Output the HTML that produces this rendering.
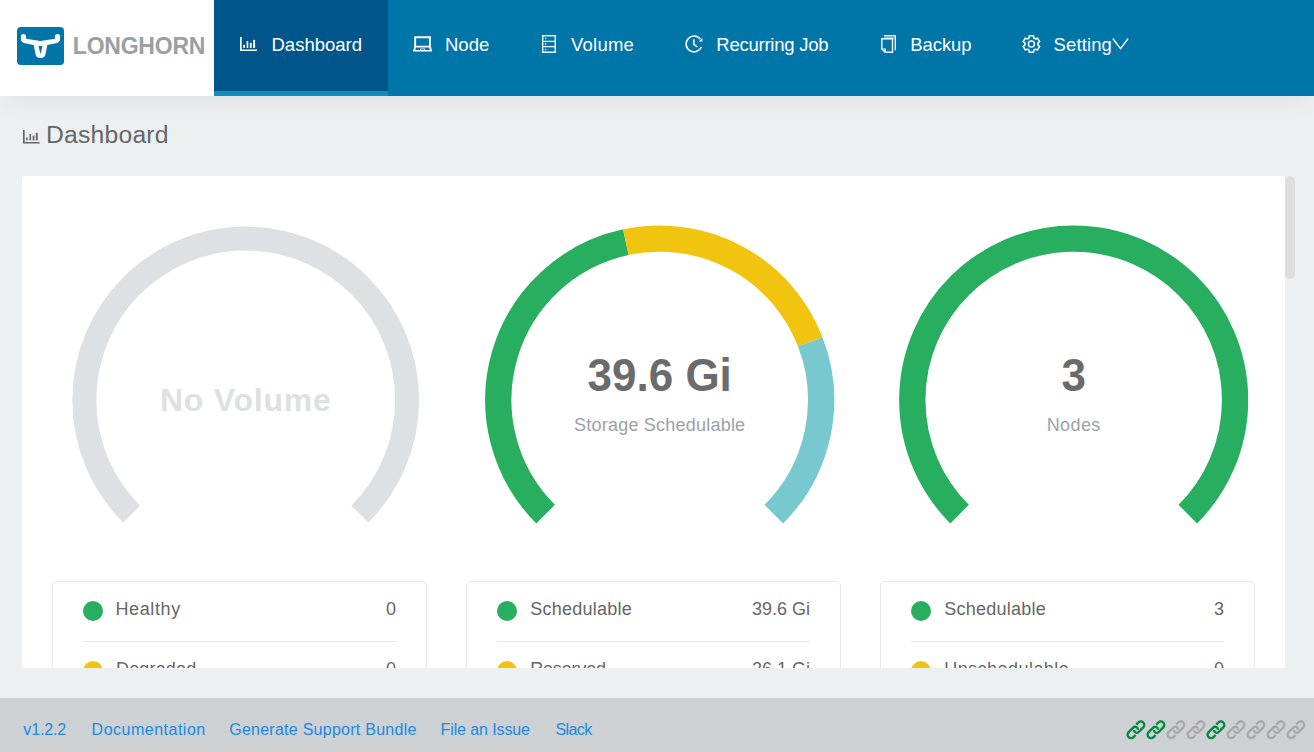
<!DOCTYPE html>
<html lang="en">
<head>
<meta charset="utf-8">
<title>Longhorn</title>
<style>
html,body{margin:0;padding:0;}
body{width:1314px;height:752px;overflow:hidden;position:relative;background:#ecf0f1;font-family:"Liberation Sans",sans-serif;color:#666;}
.abs{position:absolute;}
.t{position:absolute;white-space:nowrap;line-height:normal;}
#hdr{left:0;top:0;width:1314px;height:96px;background:#0075a8;box-shadow:0 1px 30px rgba(0,0,0,0.07);}
#logo{left:0;top:0;width:214px;height:96px;background:#fff;}
#active{left:214px;top:0;width:174px;height:91px;background:#00558b;border-bottom:5px solid #108ebb;}
.nav{color:#fff;font-size:18.5px;top:34px;}
.ico{position:absolute;overflow:visible;}
#panel{left:22px;top:176px;width:1263px;height:492px;background:#fff;border-radius:3px 3px 0 0;overflow:hidden;}
#thumb{left:1285.2px;top:176px;width:9.6px;height:102.5px;border-radius:5px;background:#dedede;}
#footer{left:0;top:698px;width:1314px;height:54px;background:#cdd1d3;}
.fl{color:#2188e4;font-size:16px;top:721px;}
.card{position:absolute;top:405px;width:373px;height:200px;border:1px solid #e8e8e8;border-radius:5px;}
.dot{position:absolute;width:20px;height:20px;border-radius:50%;left:30px;}
.lbl{font-size:18px;left:64px;color:#666;}
.val{font-size:18px;right:30px;color:#666;}
.sep{position:absolute;left:30px;right:30px;height:1px;background:#e8e8e8;}
.big{font-weight:bold;color:#6b6b6b;font-size:44px;width:300px;text-align:center;transform:scaleY(1.05);transform-origin:50% 81%;}
.sub{font-size:18px;color:#9aa2a8;width:300px;text-align:center;}
</style>
</head>
<body>
<div id="hdr" class="abs"></div>
<div id="logo" class="abs"></div>
<div id="active" class="abs"></div>

<svg class="abs" style="left:17px;top:27px" width="47" height="38" viewBox="0 0 47 38">
<rect width="47" height="38" rx="3.8" fill="#0075a8"/>
<path d="M3.9 9.2C3.9 6.2 9 6.2 9 9.2L9.05 11.7L23.5 14.1L37.95 11.7L38 9.2C38 6.2 43.1 6.2 43.1 9.2L43.1 11.5C43.1 14.5 41.5 15.8 39 16.3L30.3 18L28.7 26.3C28.2 29.8 26.5 31.05 23.5 31.05C20.5 31.05 18.8 29.8 18.3 26.3L16.7 18L8 16.3C5.5 15.8 3.9 14.5 3.9 11.5Z" fill="#fff"/>
<path d="M21.6 18.9L25.4 18.9L23.8 26.3L23.2 26.3Z" fill="#0075a8"/>
</svg>
<div class="t" id="brand" style="left:72.8px;top:33.3px;font-size:23px;font-weight:bold;color:#9aa0a3;letter-spacing:-0.22px">LONGHORN</div>

<!-- nav icons -->
<svg class="ico" style="left:240px;top:37px" width="17" height="14" viewBox="0 0 17 14" fill="#fff">
<path d="M0 0h1.7v12.6H17V14H0z"/><rect x="3.2" y="7.8" width="1.7" height="3.1"/><rect x="6.6" y="4.2" width="1.7" height="6.7"/><rect x="9.9" y="5.9" width="1.8" height="5"/><rect x="13.1" y="2.9" width="2" height="8"/>
</svg>

<svg class="ico" style="left:413px;top:36px" width="20" height="16" viewBox="0 0 20 16">
<path fill="#fff" fill-rule="evenodd" d="M1.2 0.3H17.9V10.7L19.2 15.6H-0.1L1.2 10.7Z M3.1 2.2V9.7H16V2.2Z M3 11.45L2.35 14H7.2V12.5H11.9V14H16.75L16.1 11.45Z M8.1 13.0H11V13.85H8.1Z"/>
</svg>
<svg class="ico" style="left:542px;top:35px" width="14" height="18" viewBox="0 0 14 18">
<rect x="0.7" y="0.7" width="12.6" height="16.5" fill="none" stroke="#fff" stroke-width="1.4"/>
<path stroke="#fff" stroke-width="1.3" d="M0.7 6.4H13.3M0.7 11.6H13.3"/>
<rect x="2.9" y="2.8" width="1.3" height="1.3" fill="#fff"/><rect x="2.9" y="8.3" width="1.3" height="1.5" fill="#fff"/><rect x="2.9" y="13.9" width="1.3" height="1.3" fill="#fff"/>
</svg>
<svg class="ico" style="left:685px;top:35px" width="18" height="18" viewBox="0 0 18 18">
<path fill="none" stroke="#fff" stroke-width="1.55" d="M16.38 11.96A7.9 7.9 0 1 1 15.29 4.14"/>
<path fill="#fff" d="M17.3 3.1V6.4H13.9Z"/>
<path fill="none" stroke="#fff" stroke-width="1.5" d="M8.9 4.2V9.4L12.4 12"/>
</svg>
<svg class="ico" style="left:881px;top:35px" width="15" height="18" viewBox="0 0 15 18">
<path fill="#fff" fill-opacity="0.45" d="M3 1.2H13.7V4.5H12.2V3H3Z"/>
<path fill="none" stroke="#fff" stroke-width="1.3" d="M3 0.65H14.3V15.3"/>
<path fill="none" stroke="#fff" stroke-width="1.4" d="M0.8 3.7H11.5V17.2H4.2L0.8 14Z"/>
<path fill="none" stroke="#fff" stroke-width="1.2" d="M0.8 14H4.2V17.2"/>
</svg>
<svg class="ico" style="left:1022px;top:35px" width="19" height="18" viewBox="0 0 19 18">
<path fill="none" stroke="#fff" stroke-width="1.5" stroke-linejoin="round" d="M11.83 3.02 L11.47 0.75 L7.33 0.75 L6.97 3.02 L5.40 3.93 L3.25 3.11 L1.18 6.69 L2.96 8.15 L2.96 9.95 L1.18 11.41 L3.25 14.99 L5.40 14.17 L6.97 15.08 L7.33 17.35 L11.47 17.35 L11.83 15.08 L13.40 14.17 L15.55 14.99 L17.62 11.41 L15.84 9.95 L15.84 8.15 L17.62 6.69 L15.55 3.11 L13.40 3.93Z"/>
<circle cx="9.4" cy="9.05" r="3.05" fill="none" stroke="#fff" stroke-width="1.4"/>
</svg>
<svg class="ico" style="left:1112px;top:38px" width="17" height="12" viewBox="0 0 17 12">
<path fill="none" stroke="#fff" stroke-width="1.35" d="M0.8 0.5L8.5 10.6L16.2 0.5"/>
</svg>

<div class="t nav" id="n1" style="left:271.5px">Dashboard</div>
<div class="t nav" id="n2" style="left:445px">Node</div>
<div class="t nav" id="n3" style="left:571px;letter-spacing:0.24px">Volume</div>
<div class="t nav" id="n4" style="left:716.3px;letter-spacing:-0.25px">Recurring Job</div>
<div class="t nav" id="n5" style="left:910.3px;letter-spacing:-0.1px">Backup</div>
<div class="t nav" id="n6" style="left:1053.5px;letter-spacing:0.13px">Setting</div>

<svg class="ico" style="left:23px;top:130.4px" width="16.6" height="13.4" viewBox="0 0 17 14" fill="#666" preserveAspectRatio="none">
<path d="M0 0h1.7v12.6H17V14H0z"/><rect x="3.2" y="7.8" width="1.7" height="3.1"/><rect x="6.6" y="4.2" width="1.7" height="6.7"/><rect x="9.9" y="5.9" width="1.8" height="5"/><rect x="13.1" y="2.9" width="2" height="8"/>
</svg>
<div class="t" id="title" style="left:46px;top:121.3px;font-size:24.7px;color:#666;letter-spacing:0.22px">Dashboard</div>

<div id="panel" class="abs">
  <svg class="abs" style="left:0;top:0" width="1263" height="492" viewBox="22 176 1263 492">
    <g fill="none">
      <path stroke="#dee1e3" stroke-width="24" d="M131.57 514.13A161.4 161.4 0 1 1 359.83 514.13"/>
      <path stroke="#27ae5f" stroke-width="26.3" d="M545.57 514.13A161.4 161.4 0 0 1 625.86 242.19"/>
      <path stroke="#f1c40f" stroke-width="26.3" d="M625.86 242.19A161.4 161.4 0 0 1 810.28 341.89"/>
      <path stroke="#78c9cf" stroke-width="26.3" d="M810.28 341.89A161.4 161.4 0 0 1 773.83 514.13"/>
      <path stroke="#27ae5f" stroke-width="26.3" d="M959.57 514.13A161.4 161.4 0 1 1 1187.83 514.13"/>
    </g>
  </svg>
  <div class="t" id="nov" style="left:73.69999999999999px;top:205.73999999999998px;width:300px;text-align:center;font-size:32px;font-weight:bold;letter-spacing:0.75px;color:#dee1e3">No Volume</div>
  <div class="t big" id="b2" style="left:487.70000000000005px;top:174.68px">39.6 Gi</div>
  <div class="t sub" id="s2" style="letter-spacing:0.22px;left:487.70000000000005px;top:239.10999999999999px">Storage Schedulable</div>
  <div class="t big" id="b3" style="left:901.7px;top:174.68px">3</div>
  <div class="t sub" id="s3" style="letter-spacing:0.4px;left:901.7px;top:239.10999999999999px">Nodes</div>
  <div class="card" style="left:30px"><div class="dot" style="top:19px;background:#27ae5f"></div><div class="t lbl" style="top:17.3px;left:62.5px;letter-spacing:0.6px">Healthy</div><div class="t val" style="top:17.3px">0</div><div class="sep" style="top:59px"></div><div class="dot" style="top:79px;background:#f1c40f"></div><div class="t lbl" style="top:77.3px;left:63px;letter-spacing:0.16px">Degraded</div><div class="t val" style="top:77.3px">0</div><div class="sep" style="top:119px"></div><div class="dot" style="top:139px;background:#f15354"></div><div class="t lbl" style="top:137.3px;left:63px;letter-spacing:0.3px">Fault</div><div class="t val" style="top:137.3px">0</div><div class="sep" style="top:179px"></div></div><div class="card" style="left:444px"><div class="dot" style="top:19px;background:#27ae5f"></div><div class="t lbl" style="top:17.3px;left:63.2px;letter-spacing:0.24px">Schedulable</div><div class="t val" style="top:17.3px">39.6 Gi</div><div class="sep" style="top:59px"></div><div class="dot" style="top:79px;background:#f1c40f"></div><div class="t lbl" style="top:77.3px;left:63.2px;letter-spacing:-0.17px">Reserved</div><div class="t val" style="top:77.3px">26.1 Gi</div><div class="sep" style="top:119px"></div><div class="dot" style="top:139px;background:#78c9cf"></div><div class="t lbl" style="top:137.3px;left:63.2px;letter-spacing:0.3px">Used</div><div class="t val" style="top:137.3px">21.3 Gi</div><div class="sep" style="top:179px"></div></div><div class="card" style="left:858px"><div class="dot" style="top:19px;background:#27ae5f"></div><div class="t lbl" style="top:17.3px;left:63.2px;letter-spacing:0.24px">Schedulable</div><div class="t val" style="top:17.3px">3</div><div class="sep" style="top:59px"></div><div class="dot" style="top:79px;background:#f1c40f"></div><div class="t lbl" style="top:77.3px;left:63.2px;letter-spacing:0.46px">Unschedulable</div><div class="t val" style="top:77.3px">0</div><div class="sep" style="top:119px"></div><div class="dot" style="top:139px;background:#f15354"></div><div class="t lbl" style="top:137.3px;left:63.2px;letter-spacing:0.3px">Down</div><div class="t val" style="top:137.3px">0</div><div class="sep" style="top:179px"></div></div>
</div>
<div id="thumb" class="abs"></div>
<div id="footer" class="abs"></div>
<div class="t fl" id="f1" style="left:23.3px;letter-spacing:-0.15px">v1.2.2</div>
<div class="t fl" id="f2" style="left:91.6px;letter-spacing:0.5px">Documentation</div>
<div class="t fl" id="f3" style="left:229.2px;letter-spacing:0.26px">Generate Support Bundle</div>
<div class="t fl" id="f4" style="left:440.5px;letter-spacing:-0.1px">File an Issue</div>
<div class="t fl" id="f5" style="left:555.5px;letter-spacing:-0.6px">Slack</div>
<svg class="ico" style="left:1126px;top:720px" width="180" height="20" viewBox="0 0 180 20">
<g fill="none" stroke="#00893e" stroke-width="2.3" transform="translate(9.95 9.8) rotate(-45)"><path d="M3.9 -3.5H6.86A3.5 3.5 0 0 1 6.86 3.5H0.4A2.8 2.8 0 0 1 -1.44 -1.41"/><path d="M-3.9 3.5H-6.86A3.5 3.5 0 0 1 -6.86 -3.5H-0.4A2.8 2.8 0 0 1 1.44 1.41"/></g><g fill="none" stroke="#00893e" stroke-width="2.3" transform="translate(29.95 9.8) rotate(-45)"><path d="M3.9 -3.5H6.86A3.5 3.5 0 0 1 6.86 3.5H0.4A2.8 2.8 0 0 1 -1.44 -1.41"/><path d="M-3.9 3.5H-6.86A3.5 3.5 0 0 1 -6.86 -3.5H-0.4A2.8 2.8 0 0 1 1.44 1.41"/></g><g fill="none" stroke="#a8a8a8" stroke-width="2.3" transform="translate(49.95 9.8) rotate(-45)"><path d="M3.9 -3.5H6.86A3.5 3.5 0 0 1 6.86 3.5H0.4A2.8 2.8 0 0 1 -1.44 -1.41"/><path d="M-3.9 3.5H-6.86A3.5 3.5 0 0 1 -6.86 -3.5H-0.4A2.8 2.8 0 0 1 1.44 1.41"/></g><g fill="none" stroke="#a8a8a8" stroke-width="2.3" transform="translate(69.95 9.8) rotate(-45)"><path d="M3.9 -3.5H6.86A3.5 3.5 0 0 1 6.86 3.5H0.4A2.8 2.8 0 0 1 -1.44 -1.41"/><path d="M-3.9 3.5H-6.86A3.5 3.5 0 0 1 -6.86 -3.5H-0.4A2.8 2.8 0 0 1 1.44 1.41"/></g><g fill="none" stroke="#00893e" stroke-width="2.3" transform="translate(89.95 9.8) rotate(-45)"><path d="M3.9 -3.5H6.86A3.5 3.5 0 0 1 6.86 3.5H0.4A2.8 2.8 0 0 1 -1.44 -1.41"/><path d="M-3.9 3.5H-6.86A3.5 3.5 0 0 1 -6.86 -3.5H-0.4A2.8 2.8 0 0 1 1.44 1.41"/></g><g fill="none" stroke="#a8a8a8" stroke-width="2.3" transform="translate(109.95 9.8) rotate(-45)"><path d="M3.9 -3.5H6.86A3.5 3.5 0 0 1 6.86 3.5H0.4A2.8 2.8 0 0 1 -1.44 -1.41"/><path d="M-3.9 3.5H-6.86A3.5 3.5 0 0 1 -6.86 -3.5H-0.4A2.8 2.8 0 0 1 1.44 1.41"/></g><g fill="none" stroke="#a8a8a8" stroke-width="2.3" transform="translate(129.95 9.8) rotate(-45)"><path d="M3.9 -3.5H6.86A3.5 3.5 0 0 1 6.86 3.5H0.4A2.8 2.8 0 0 1 -1.44 -1.41"/><path d="M-3.9 3.5H-6.86A3.5 3.5 0 0 1 -6.86 -3.5H-0.4A2.8 2.8 0 0 1 1.44 1.41"/></g><g fill="none" stroke="#a8a8a8" stroke-width="2.3" transform="translate(149.95 9.8) rotate(-45)"><path d="M3.9 -3.5H6.86A3.5 3.5 0 0 1 6.86 3.5H0.4A2.8 2.8 0 0 1 -1.44 -1.41"/><path d="M-3.9 3.5H-6.86A3.5 3.5 0 0 1 -6.86 -3.5H-0.4A2.8 2.8 0 0 1 1.44 1.41"/></g><g fill="none" stroke="#a8a8a8" stroke-width="2.3" transform="translate(169.95 9.8) rotate(-45)"><path d="M3.9 -3.5H6.86A3.5 3.5 0 0 1 6.86 3.5H0.4A2.8 2.8 0 0 1 -1.44 -1.41"/><path d="M-3.9 3.5H-6.86A3.5 3.5 0 0 1 -6.86 -3.5H-0.4A2.8 2.8 0 0 1 1.44 1.41"/></g>
</svg>
</body>
</html>
